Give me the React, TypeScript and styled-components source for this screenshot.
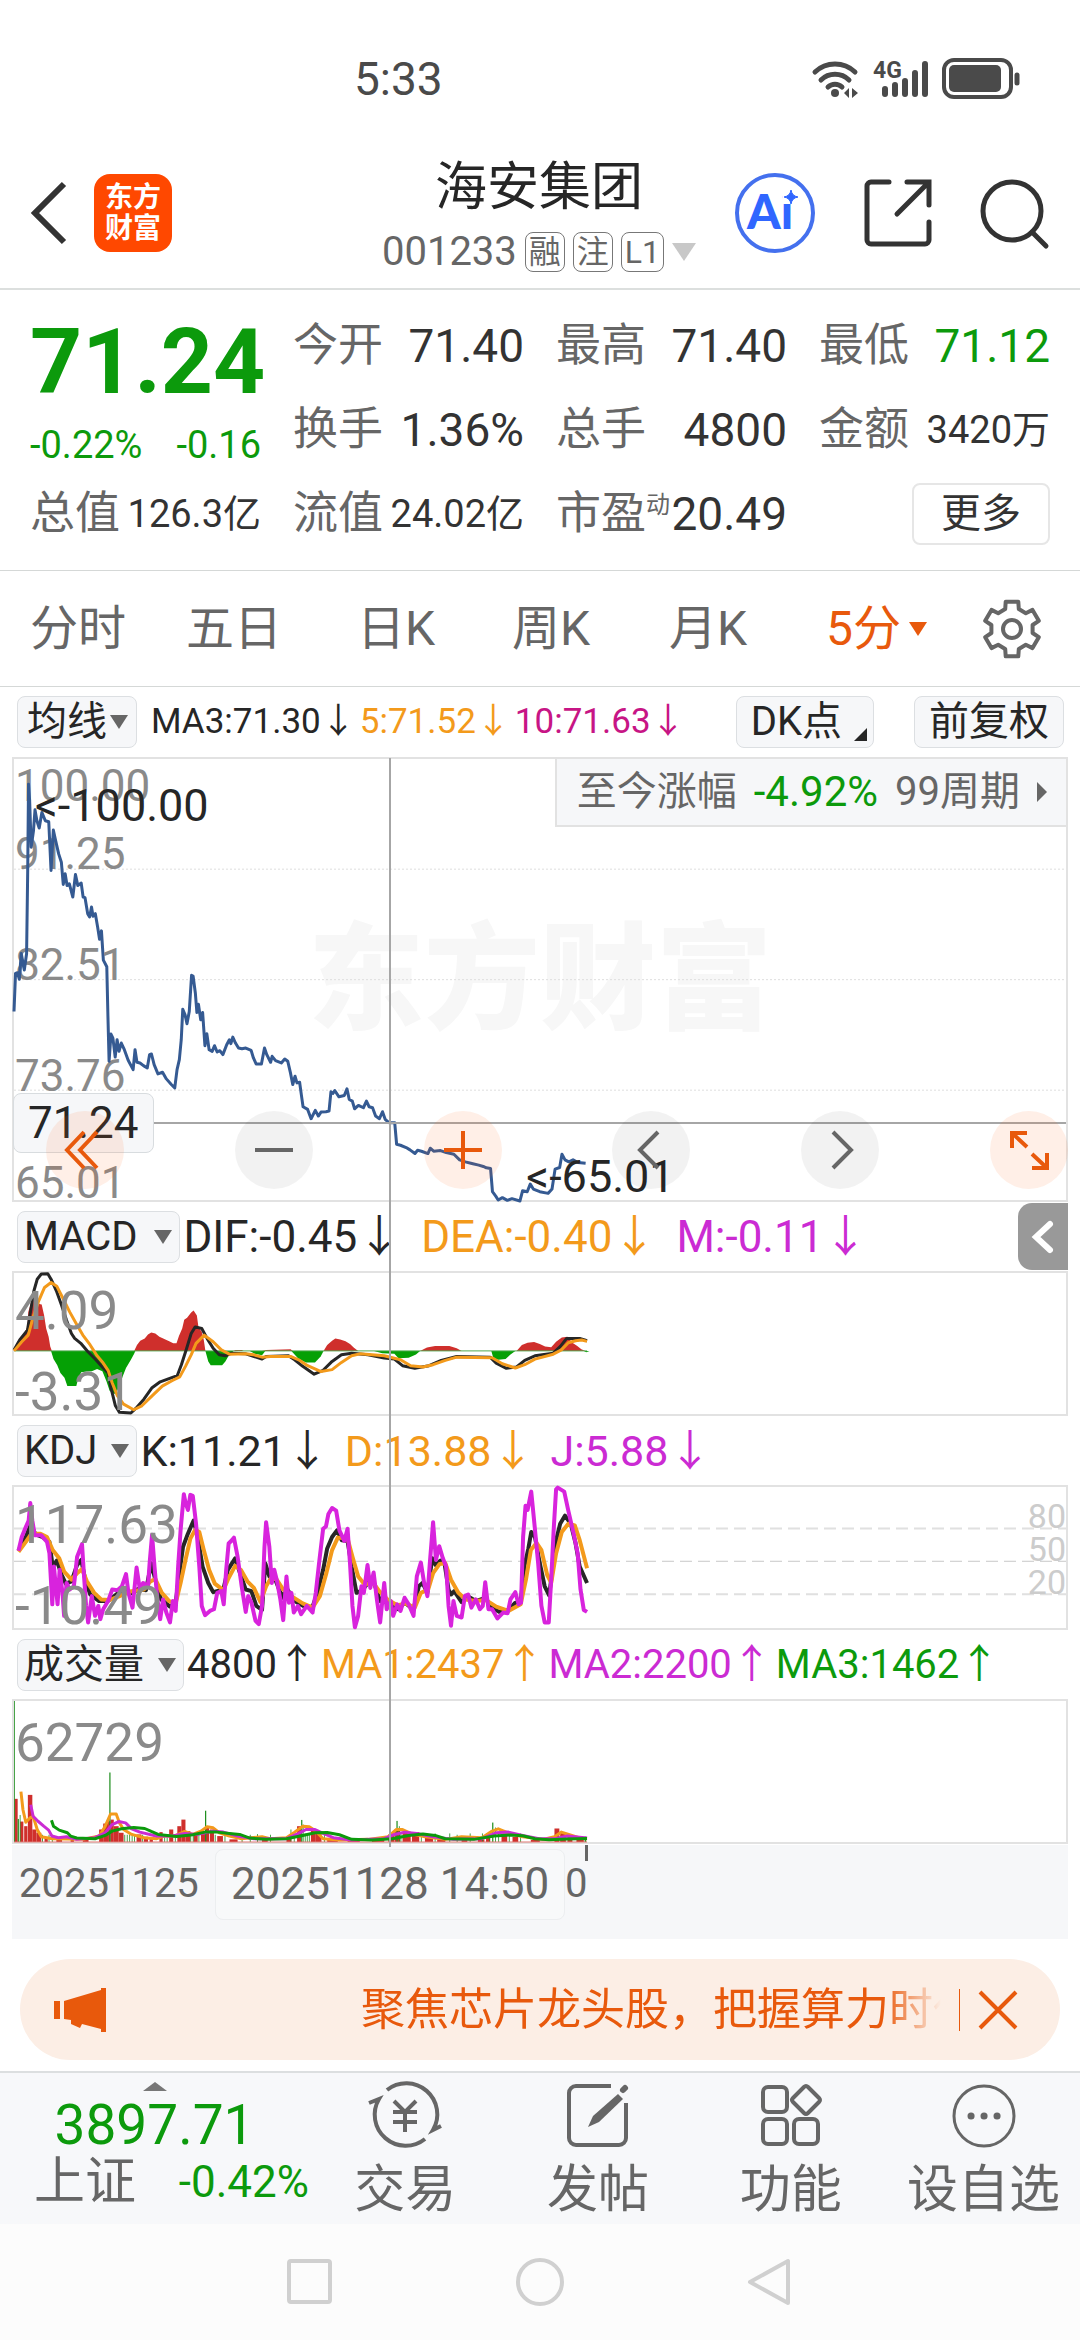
import React from "react";
import styled, { createGlobalStyle, css } from "styled-components";

const C = {
  green: "#0c9a0c",
  orange: "#e8590c",
  amber: "#f39a1b",
  pink: "#c71585",
  violet: "#cb2bd3",
  ink: "#262626",
  text: "#333333",
  muted: "#666666",
  axis: "#8a8a8a",
  frame: "#e2e2e2",
  panel: "#f6f7f9",
  cross: "#a6a6a6",
};

const GlobalStyle = createGlobalStyle`
  * { box-sizing: border-box; }
  body {
    margin: 0;
    background: #fff;
    color: ${C.text};
    font-family: Roboto, "Noto Sans CJK SC", sans-serif;
  }
  button {
    margin: 0;
    padding: 0;
    border: 0;
    background: none;
    color: inherit;
    font: inherit;
  }
  svg { display: block; overflow: visible; }
`;

const Page = styled.div`
  display: flex;
  flex-direction: column;
`;

/* ---------- status bar ---------- */

const StatusBar = styled.div`
  display: flex;
  align-items: center;
  justify-content: space-between;
  height: 108px;
  padding: 50px 60px 0 354px;
  color: #4a4a4a;
`;

const Clock = styled.time`
  font-size: 46px;
  line-height: 60px;
`;

const StatusIcons = styled.div`
  display: flex;
  align-items: center;
  gap: 14px;
`;

/* ---------- header ---------- */

const Header = styled.header`
  display: flex;
  align-items: center;
  height: 182px;
  padding: 0 32px 0 30px;
  border-bottom: 2px solid #dcdfde;
`;

const HeaderSide = styled.div<{ $end?: boolean }>`
  display: flex;
  flex: 1 0 0;
  align-items: center;
  justify-content: ${(p) => (p.$end ? "flex-end" : "flex-start")};
  gap: ${(p) => (p.$end ? 48 : 26)}px;
  padding-top: 30px;
`;

const BrandLogo = styled.button`
  width: 78px;
  height: 78px;
  border-radius: 16px;
  background: #ff4800;
  color: #fff;
  font-size: 28px;
  font-weight: 700;
  line-height: 31px;
`;

const StockName = styled.div`
  display: flex;
  flex-direction: column;
  align-items: center;
  padding-top: 40px;
`;

const Title = styled.h1`
  margin: 0;
  color: ${C.ink};
  font-size: 52px;
  font-weight: 400;
  line-height: 68px;
`;

const CodeLine = styled.div`
  display: flex;
  align-items: center;
  gap: 8px;
  color: ${C.muted};
  font-size: 40px;
  line-height: 60px;
`;

const Tag = styled.span`
  display: inline-flex;
  align-items: center;
  justify-content: center;
  min-width: 40px;
  height: 40px;
  padding: 0 3px;
  border: 1px solid #777;
  border-radius: 8px;
  font-size: 32px;
  line-height: 38px;
`;

const Caret = styled.span<{ $size: number; $color: string; $dir?: "up" | "down" | "right" }>`
  width: 0;
  height: 0;
  flex: none;
  ${({ $size, $color, $dir = "down" }) => {
    if ($dir === "right") {
      return css`
        border-top: ${$size}px solid transparent;
        border-bottom: ${$size}px solid transparent;
        border-left: ${$size}px solid ${$color};
      `;
    }
    const sides = css`
      border-left: ${$size}px solid transparent;
      border-right: ${$size}px solid transparent;
    `;
    return $dir === "up"
      ? css`
          ${sides}
          border-bottom: ${Math.round($size * 0.75)}px solid ${$color};
        `
      : css`
          ${sides}
          border-top: ${Math.round($size * 1.5)}px solid ${$color};
        `;
  }}
`;

/* ---------- quote ---------- */

const Quote = styled.section`
  display: grid;
  grid-template-columns: repeat(4, minmax(0, 1fr));
  grid-auto-rows: 84px;
  column-gap: 32px;
  padding: 14px 30px;
  border-bottom: 1px solid #d5d8d7;
`;

const PriceCell = styled.div`
  grid-row: span 2;
  display: flex;
  flex-direction: column;
  gap: 8px;
  padding-top: 8px;
  color: ${C.green};
`;

const Price = styled.strong`
  font-size: 91px;
  font-weight: 700;
  line-height: 100px;
`;

const Change = styled.div`
  display: flex;
  justify-content: space-between;
  font-size: 38px;
  line-height: 50px;
`;

const Stat = styled.div`
  display: flex;
  align-items: center;
  justify-content: space-between;
  white-space: nowrap;
`;

const StatLabel = styled.span`
  color: ${C.muted};
  font-size: 45px;
  line-height: 60px;
`;

const Sup = styled.sup`
  font-size: 24px;
  line-height: 24px;
`;

const StatValue = styled.span<{ $small?: boolean; $color?: string }>`
  color: ${(p) => p.$color ?? C.text};
  font-size: ${(p) => (p.$small ? 38 : 46)}px;
  line-height: 60px;
`;

const MoreButton = styled.button`
  align-self: center;
  justify-self: end;
  width: 138px;
  height: 62px;
  border: 2px solid #e6e6e6;
  border-radius: 8px;
  font-size: 40px;
  line-height: 56px;
`;

/* ---------- period tabs ---------- */

const Tabs = styled.nav`
  display: grid;
  grid-template-columns: 156fr 156fr 168fr 142fr 172fr 165fr 105fr;
  justify-items: center;
  align-items: center;
  height: 116px;
  padding-right: 16px;
  border-bottom: 1px solid #d5d8d7;
`;

const Tab = styled.button<{ $active?: boolean }>`
  display: flex;
  align-items: center;
  gap: 8px;
  color: ${(p) => (p.$active ? C.orange : C.muted)};
  font-size: 48px;
  line-height: 64px;
`;

/* ---------- charts ---------- */

const Charts = styled.main`
  position: relative;
  padding: 0 12px;
`;

const IndicatorRow = styled.div<{ $size: number }>`
  display: flex;
  align-items: center;
  gap: 3px;
  height: 69px;
  padding-left: 5px;
  color: ${C.ink};
  font-size: ${(p) => p.$size}px;
  line-height: 52px;
  white-space: nowrap;
`;

const AverageRow = styled(IndicatorRow)`
  gap: 14px;
  height: 70px;
`;

const Readings = styled.div<{ $gap: number }>`
  display: flex;
  gap: ${(p) => p.$gap}px;
`;

const Reading = styled.span<{ $color?: string }>`
  color: ${(p) => p.$color ?? C.ink};
`;

const Pill = styled.button<{ $gap: number }>`
  display: flex;
  align-items: center;
  gap: ${(p) => p.$gap}px;
  height: 52px;
  padding: 0 7px 0 6px;
  border: 1px solid #dcdfe2;
  border-radius: 8px;
  background: ${C.panel};
  font-size: 40px;
  line-height: 50px;
`;

const TopPill = styled(Pill)`
  padding: 0 8px 0 9px;
`;

const RightPills = styled.div`
  display: flex;
  gap: 40px;
  margin-left: auto;
  padding-right: 4px;
`;

const WidePill = styled(Pill)`
  padding: 0 14px;
`;

const CornerPill = styled(Pill)`
  padding: 0 6px 0 14px;
`;

const Corner = styled.span`
  align-self: flex-end;
  width: 0;
  height: 0;
  margin-bottom: 6px;
  border-left: 13px solid transparent;
  border-bottom: 13px solid ${C.ink};
`;

const Frame = styled.div<{ $h: number }>`
  position: relative;
  height: ${(p) => p.$h}px;
  border: 2px solid ${C.frame};
`;

const Plot = styled.svg`
  position: absolute;
  inset: 0;
  width: 100%;
  height: 100%;
  path, polyline { vector-effect: non-scaling-stroke; }
`;

const AxisLabel = styled.span<{ $top: number; $size: number }>`
  position: absolute;
  top: ${(p) => p.$top}px;
  left: 1px;
  color: ${C.axis};
  font-size: ${(p) => p.$size}px;
  line-height: ${(p) => p.$size}px;
`;

const LevelLabels = styled.div`
  position: absolute;
  top: 13px;
  right: 0;
  display: flex;
  flex-direction: column;
  color: #cccccc;
  font-size: 34px;
  line-height: 33px;
`;

const Watermark = styled.span`
  position: absolute;
  inset: 0;
  display: flex;
  align-items: center;
  justify-content: center;
  color: #f7f7f7;
  font-size: 116px;
  font-weight: 900;
  line-height: 120px;
`;

const Marker = styled.span<{ $top: number; $left: string }>`
  position: absolute;
  top: ${(p) => p.$top}px;
  left: ${(p) => p.$left};
  color: ${C.ink};
  font-size: 45px;
  line-height: 44px;
`;

const RangeInfo = styled.button`
  position: absolute;
  top: -2px;
  right: -2px;
  display: flex;
  align-items: center;
  gap: 17px;
  height: 70px;
  padding: 0 19px 0 20px;
  border: 2px solid ${C.frame};
  background: ${C.panel};
  color: ${C.muted};
  font-size: 40px;
  line-height: 60px;
`;

const RangeChange = styled.span`
  color: ${C.green};
  font-size: 42px;
`;

const CrossX = styled.span`
  position: absolute;
  top: 363px;
  left: 0;
  right: 0;
  height: 2px;
  background: ${C.cross};
`;

const CrossY = styled.span`
  position: absolute;
  top: 71px;
  bottom: 92px;
  left: 36%;
  width: 2px;
  background: ${C.cross};
`;

const PriceBox = styled.span`
  position: absolute;
  top: 334px;
  left: -1px;
  padding: 0 14px;
  border: 1px solid #d8dcdf;
  border-radius: 8px;
  background: ${C.panel};
  color: ${C.ink};
  font-size: 44px;
  line-height: 58px;
`;

const Controls = styled.div`
  position: absolute;
  right: -2px;
  bottom: 11px;
  left: 32px;
  display: flex;
  justify-content: space-between;
`;

const RoundButton = styled.button<{ $warm?: boolean }>`
  display: grid;
  place-items: center;
  width: 78px;
  height: 78px;
  border-radius: 50%;
  background: ${(p) => (p.$warm ? "rgba(255, 98, 20, 0.1)" : "rgba(0, 0, 0, 0.05)")};
  color: ${(p) => (p.$warm ? C.orange : C.muted)};
`;

const SideHandle = styled.button`
  display: grid;
  place-items: center;
  width: 50px;
  height: 67px;
  margin-left: auto;
  border-radius: 14px 0 0 14px;
  background: #999;
`;

const DateStrip = styled.div`
  position: relative;
  height: 94px;
  margin-top: 1px;
  background: ${C.panel};
  color: ${C.muted};
`;

const DateLabels = styled.div`
  display: flex;
  justify-content: space-between;
  width: 54.5%;
  padding: 15px 0 0 7px;
  font-size: 40px;
  line-height: 48px;
`;

const DateTick = styled.span`
  position: absolute;
  top: 0;
  left: 54.3%;
  width: 3px;
  height: 16px;
  background: ${C.muted};
`;

const DateBox = styled.span`
  position: absolute;
  top: 4px;
  left: 203px;
  padding: 0 15px;
  border: 1px solid #eceef0;
  border-radius: 8px;
  background: #f8f9fa;
  font-size: 44px;
  line-height: 69px;
`;

/* ---------- banner, bottom bar, system navigation ---------- */

const Banner = styled.aside`
  display: flex;
  align-items: center;
  height: 101px;
  margin: 20px 20px 11px;
  padding: 0 43px 0 34px;
  border-radius: 51px;
  background: #fceee5;
  color: ${C.orange};
`;

const BannerText = styled.p`
  flex: 1;
  margin: 0 18px 0 255px;
  overflow: hidden;
  font-size: 44px;
  line-height: 60px;
  white-space: nowrap;
  mask-image: linear-gradient(to right, #000 90%, transparent);
`;

const BannerClose = styled.button`
  display: flex;
  align-items: center;
  padding-left: 19px;
  border-left: 1px solid ${C.orange};
`;

const BottomBar = styled.footer`
  display: grid;
  grid-template-columns: 309px repeat(4, 1fr);
  height: 153px;
  border-top: 2px solid #dcdfe0;
  background: #f7f8fa;
`;

const IndexCell = styled.button`
  display: flex;
  flex-direction: column;
  align-items: center;
  padding-top: 9px;
`;

const IndexValue = styled.span`
  color: ${C.green};
  font-size: 55px;
  line-height: 68px;
`;

const IndexLine = styled.span`
  display: flex;
  align-items: center;
  justify-content: space-between;
  align-self: stretch;
  padding-left: 34px;
  color: ${C.muted};
  font-size: 51px;
  line-height: 46px;
`;

const IndexChange = styled.span`
  color: ${C.green};
  font-size: 44px;
`;

const Action = styled.button`
  display: flex;
  flex-direction: column;
  align-items: center;
  gap: 10px;
  padding-top: 9px;
  color: ${C.muted};
  font-size: 51px;
  line-height: 64px;
  white-space: nowrap;
`;

const SystemNav = styled.nav`
  display: flex;
  align-items: center;
  justify-content: center;
  gap: 180px;
  height: 116px;
  background: #fcfcfc;
`;

/* ---------- icons ---------- */

const line = { fill: "none", stroke: "currentColor" } as const;

const WifiIcon = () => (
  <svg width="48" height="38" viewBox="0 0 48 38" {...line} strokeWidth="5" strokeLinecap="round">
    <path d="M4 12a29 29 0 0 1 40 0M10 20a20 20 0 0 1 28 0M17 27a10 10 0 0 1 14 0" />
    <circle cx="24" cy="33" r="4" fill="currentColor" stroke="none" />
    <path d="M33 33l5-5v10zM47 33l-6-5v10z" fill="currentColor" stroke="none" />
  </svg>
);

const SignalIcon = () => (
  <svg width="55" height="38" viewBox="0 0 55 38" stroke="currentColor" strokeWidth="6" strokeLinecap="round">
    <path d="M12 29v5M22 25v9M32 21v13M42 13v21M52 4v30" />
    <text x="0" y="18" fontSize="23" fontWeight="700" fill="currentColor" stroke="none">
      4G
    </text>
  </svg>
);

const BatteryIcon = () => (
  <svg width="78" height="42" viewBox="0 0 78 42">
    <rect x="2" y="2" width="67" height="37" rx="10" {...line} strokeWidth="4" />
    <rect x="7" y="7" width="52" height="27" rx="5" fill="currentColor" />
    <path d="M75 17v8" stroke="currentColor" strokeWidth="5" strokeLinecap="round" />
  </svg>
);

const BackIcon = () => (
  <svg width="38" height="62" viewBox="0 0 38 62" {...line} strokeWidth="6" color={C.text}>
    <path d="M34 2L5 31l29 29" />
  </svg>
);

const AiIcon = () => (
  <svg width="82" height="82" viewBox="0 0 82 82">
    <circle cx="41" cy="41" r="38" fill="none" stroke="#4470ee" strokeWidth="4" />
    <text x="13" y="57" fontSize="48" fontWeight="900" fontFamily="Lato, Roboto, sans-serif" fill="#3066ff">
      Ai
    </text>
    <path d="M49 17h15v14H49z" fill="#fff" />
    <path d="M57 18q1 6 7 7q-6 1-7 7q-1-6-7-7q6-1 7-7z" fill="#3066ff" stroke="#3066ff" strokeLinejoin="round" />
  </svg>
);

const ShareIcon = () => (
  <svg width="68" height="68" viewBox="0 0 68 68" {...line} strokeWidth="5" strokeLinecap="round" color={C.text}>
    <path d="M25 3H7a4 4 0 0 0-4 4v54a4 4 0 0 0 4 4h54a4 4 0 0 0 4-4V43M65 26V3H43M64 4L33 35" />
  </svg>
);

const SearchIcon = () => (
  <svg width="68" height="70" viewBox="0 0 68 70" {...line} strokeWidth="5" color={C.text}>
    <circle cx="32" cy="33" r="29" />
    <path d="M52 54l14 14" strokeLinecap="round" />
  </svg>
);

/* Six-toothed outline, one tooth every 60 degrees starting at the top. */
const gearPath = (() => {
  const pts: string[] = [];
  for (let i = 0; i < 6; i++) {
    const mid = i * 60 - 90;
    [
      [-19, 21],
      [-13, 28],
      [13, 28],
      [19, 21],
    ].forEach(([offset, r]) => {
      const a = ((mid + offset) * Math.PI) / 180;
      pts.push(`${(30 + r * Math.cos(a)).toFixed(1)} ${(30 + r * Math.sin(a)).toFixed(1)}`);
    });
  }
  return `M${pts.join("L")}Z`;
})();

const GearIcon = () => (
  <svg width="60" height="60" viewBox="0 0 60 60" {...line} strokeWidth="4" strokeLinejoin="round">
    <path d={gearPath} />
    <circle cx="30" cy="30" r="9" />
  </svg>
);

const HornIcon = () => (
  <svg width="52" height="46" viewBox="0 0 52 46" fill="currentColor">
    <path d="M0 14h6v18H0zM10 14L47 3V1h5v44h-5v-3l-19-5-2 4-9-4v-4l-7-1z" />
  </svg>
);

const CloseIcon = () => (
  <svg width="38" height="42" viewBox="0 0 38 42" {...line} strokeWidth="4">
    <path d="M1 3l36 36M37 3L1 39" />
  </svg>
);

const controlIcons: [string, boolean, string][] = [
  ["快退", true, "M38 21L21 39l17 18M51 21L34 39l17 18"],
  ["缩小", false, "M20 39h38"],
  ["放大", true, "M20 39h38M39 20v38"],
  ["左移", false, "M46 21L28 39l18 18"],
  ["右移", false, "M32 21l18 18-18 18"],
  ["全屏", true, "M37 22H22v15M22 22l15 14M42 57h15V42M57 57L42 43"],
];

const TradeIcon = () => (
  <svg width="74" height="66" viewBox="0 0 74 66" {...line} strokeWidth="4">
    <path d="M19 8A31 31 0 0 1 65 48L73 44M57 57A31 31 0 0 1 11 17L1 21" />
    <path d="M26 19l11 11 11-11M37 30v20M25 30h24M25 40h24" />
  </svg>
);

const PostIcon = () => (
  <svg width="62" height="66" viewBox="0 0 62 66" {...line} strokeWidth="4">
    <path d="M44 4H9a7 7 0 0 0-7 7v45a7 7 0 0 0 7 7h43a7 7 0 0 0 7-7V21" />
    <path d="M51 12l5 5-24 23-11 5 5-11z" fill="currentColor" stroke="none" />
    <path d="M56 8l2-2" strokeWidth="6" strokeLinecap="round" />
  </svg>
);

const FeaturesIcon = () => (
  <svg width="62" height="66" viewBox="0 0 62 66" {...line} strokeWidth="4">
    <rect x="3" y="5" width="24" height="25" rx="5" />
    <rect x="3" y="37" width="24" height="25" rx="5" />
    <rect x="34" y="37" width="24" height="25" rx="5" />
    <path d="M44 5q2-2 4 0l11 11q2 2 0 4L48 31q-2 2-4 0L33 20q-2-2 0-4z" />
  </svg>
);

const DotsIcon = () => (
  <svg width="66" height="66" viewBox="0 0 66 66" {...line} strokeWidth="3">
    <circle cx="33" cy="34" r="30" />
    <path d="M20 34h.1M33 34h.1M46 34h.1" strokeWidth="7" strokeLinecap="round" />
  </svg>
);

/* ---------- series ---------- */

const price =
  "33,815 37,700 42,698 47,718 52,640 60,690 66,640 69,380 71,130 74,180 78,320 84,270 88,207 93,240 99,262 106,215 115,240 124,243 130,390 136,268 142,300 150,340 157,365 162,432 167,400 172,435 178,430 187,470 194,402 200,435 209,428 214,470 219,472 226,520 231,530 236,500 240,528 246,520 252,560 257,597 262,572 267,660 276,680 279,830 282,965 287,883 292,895 298,952 303,900 308,935 314,910 322,930 332,962 345,990 350,930 355,968 363,970 372,978 382,985 388,945 393,943 400,975 410,1003 422,998 432,1018 445,1035 454,1045 460,990 466,960 471,900 475,808 481,825 486,852 492,815 498,706 502,708 508,760 512,818 516,793 522,840 527,818 533,918 538,882 544,930 552,935 558,918 565,937 572,933 580,945 590,915 597,900 601,912 606,892 613,910 621,925 630,927 640,925 654,932 660,955 667,973 681,973 689,925 695,945 705,968 709,950 718,963 733,970 742,958 750,965 757,1000 763,1035 769,1010 774,1030 781,1028 786,1070 790,1102 802,1110 811,1138 822,1113 830,1130 837,1118 850,1117 858,1115 863,1057 868,1062 873,1053 884,1072 898,1068 905,1048 911,1080 919,1085 925,1108 935,1098 948,1105 956,1085 963,1102 972,1105 980,1130 990,1138 998,1117 1005,1140 1015,1150 1030,1150 1035,1215 1045,1218 1060,1225 1070,1232 1083,1243 1090,1233 1100,1236 1117,1243 1123,1227 1132,1236 1150,1234 1165,1240 1185,1245 1200,1262 1215,1268 1232,1273 1250,1278 1262,1282 1270,1286 1281,1288 1286,1358 1295,1372 1301,1383 1312,1376 1325,1384 1337,1379 1358,1386 1365,1355 1377,1358 1385,1335 1393,1350 1410,1358 1432,1363 1442,1350 1450,1290 1462,1285 1468,1245 1476,1262 1486,1268 1497,1262 1510,1270 1530,1272";

const macdUp = [
  "31,453 36,432 46,412 56,400 64,380 66,335 72,310 80,290 88,280 93,310 99,312 105,345 110,385 116,410 120,440 124,453",
  "326,453 333,435 341,422 352,415 360,403 368,397 378,400 388,410 400,417 412,424 422,430 430,430 436,408 444,385 449,358 456,352 466,336 472,330 480,345 484,382 492,395 497,420 501,453",
  "791,453 800,435 812,422 820,415 832,418 845,424 856,432 865,443 876,453",
  "1028,453 1045,443 1065,438 1100,438 1118,445 1130,453",
  "1265,453 1278,435 1292,428 1308,426 1322,432 1335,440 1350,442 1362,425 1376,412 1390,410 1402,428 1414,438 1424,448 1434,453",
  "570,453 575,450 590,450 595,453",
  "640,453 650,450 710,448 716,453",
];

const macdDown = [
  "122,453 128,478 137,496 145,520 155,535 162,560 184,560 188,540 196,518 210,516 222,515 235,508 248,515 258,545 266,575 280,585 290,560 298,530 306,505 318,480 326,462 329,453",
  "501,453 508,485 514,497 542,497 550,485 558,468 570,453",
  "610,453 622,462 640,466 648,453",
  "712,453 730,478 748,488 770,488 784,470 791,453",
  "915,453 935,460 965,462 975,475 1000,474 1018,464 1028,453",
  "1203,453 1208,475 1220,480 1238,478 1250,464 1262,453",
  "1430,453 1436,457 1444,453",
];

const dif =
  "31,450 45,420 64,390 72,330 80,270 88,235 98,219 114,218 122,235 135,270 148,315 160,360 172,400 180,415 195,430 212,455 232,480 250,505 262,520 270,570 280,620 290,640 318,642 330,628 350,600 370,565 390,547 410,538 432,528 442,495 455,445 466,400 476,380 492,385 505,415 520,445 535,465 550,468 565,460 600,462 640,478 650,470 705,468 720,480 740,500 768,524 790,512 812,485 835,465 860,460 900,465 940,475 965,478 985,498 1015,506 1050,498 1080,482 1118,470 1200,472 1215,490 1240,506 1265,502 1285,482 1310,468 1355,460 1372,440 1388,415 1420,415 1438,422";

const dea =
  "31,453 50,425 66,405 78,350 92,300 106,260 122,245 136,256 152,295 168,335 186,375 200,405 218,435 235,468 250,490 262,512 272,550 285,590 300,615 325,632 345,620 370,590 395,560 420,543 438,532 452,500 466,465 478,430 498,405 520,425 540,450 560,463 600,462 620,465 640,472 660,470 710,470 730,480 752,498 785,516 812,510 835,488 860,468 880,462 940,468 980,480 1005,498 1035,502 1060,495 1090,482 1118,472 1205,474 1230,492 1262,505 1285,495 1310,478 1355,463 1375,450 1392,428 1410,422 1425,420 1438,424";

const kdjJ =
  "42,392 50,350 60,320 67,300 71,247 76,300 82,345 98,345 112,365 118,400 125,555 129,440 138,555 143,450 150,520 154,590 160,490 168,510 178,500 186,410 198,372 203,470 208,560 213,610 222,530 230,590 238,560 243,600 250,570 262,545 272,510 285,512 296,500 306,463 312,520 322,565 332,443 340,510 348,490 360,500 364,430 370,343 376,440 383,540 390,600 397,540 405,580 414,610 421,545 428,575 434,440 440,330 448,220 452,245 458,268 464,222 470,225 478,310 486,440 492,560 500,588 512,575 522,570 530,520 540,515 546,555 552,450 558,370 566,360 571,352 580,410 590,500 600,578 606,530 614,550 624,605 632,615 640,560 646,380 650,305 658,380 664,490 670,450 676,480 685,540 692,603 700,470 706,550 712,520 718,580 728,560 736,585 750,560 764,580 772,520 780,430 790,325 797,318 803,280 812,262 822,270 830,330 842,362 850,325 856,430 862,560 868,625 876,590 884,500 890,520 899,435 906,505 914,458 922,540 930,610 940,490 946,570 956,545 962,590 972,555 980,575 990,535 1000,555 1012,590 1020,470 1030,428 1038,490 1046,530 1052,430 1060,305 1067,420 1075,378 1084,415 1092,440 1098,560 1104,620 1110,545 1118,590 1130,595 1138,530 1146,525 1154,565 1165,540 1175,570 1182,560 1188,488 1196,570 1205,570 1218,598 1232,580 1243,582 1250,540 1262,518 1270,555 1276,550 1281,350 1287,255 1292,268 1301,212 1308,300 1318,430 1326,560 1334,610 1344,610 1350,480 1356,330 1362,205 1366,200 1382,212 1392,270 1405,340 1415,400 1422,510 1430,572 1438,578";

const kdjK =
  "42,392 60,350 72,312 84,342 100,350 118,365 126,440 136,422 148,465 158,492 172,485 186,435 196,420 206,480 218,525 240,545 262,545 285,522 305,510 322,522 335,508 355,512 368,430 378,480 392,540 414,562 428,550 436,470 446,380 458,340 472,300 482,350 494,440 508,490 520,518 545,510 556,450 574,415 586,460 600,510 614,515 626,560 640,572 648,430 658,470 672,478 690,535 700,505 720,545 745,562 764,562 776,520 790,450 800,385 812,350 824,330 836,360 850,362 860,440 872,520 886,512 900,490 915,490 930,545 950,550 975,570 990,550 1012,570 1025,500 1034,490 1046,520 1058,415 1066,435 1078,422 1088,430 1098,510 1104,525 1112,515 1130,548 1145,530 1165,545 1188,535 1205,565 1222,578 1245,572 1262,550 1275,550 1284,440 1294,385 1301,335 1310,350 1322,430 1334,500 1345,528 1354,440 1362,360 1372,310 1384,285 1398,310 1410,370 1420,440 1438,490";

const kdjD =
  "42,395 60,365 74,340 96,340 112,350 126,390 142,415 154,455 172,480 186,460 198,448 210,485 228,520 245,540 265,542 290,530 320,515 350,510 366,485 378,478 394,520 412,545 428,552 440,490 452,420 464,355 476,328 486,335 496,385 510,450 524,492 545,512 558,475 574,438 588,450 604,485 620,505 636,548 650,500 662,475 676,480 692,510 712,530 740,552 764,565 782,530 798,460 812,390 826,352 850,355 862,410 876,470 892,495 912,488 928,515 948,540 972,558 992,552 1015,565 1030,520 1048,510 1060,460 1076,432 1090,430 1104,480 1122,520 1140,540 1165,545 1190,542 1215,562 1245,575 1275,555 1288,480 1300,390 1314,368 1326,390 1340,465 1350,490 1362,400 1376,335 1392,310 1408,315 1420,360 1438,445";

/* [x, width, top] of each volume column; the baseline sits at 638. */
const volUp: [number, number, number][] = [
  [32, 8, 507], [46, 8, 576], [56, 8, 590], [65, 11, 495], [76, 10, 600], [86, 12, 610], [106, 8, 625],
  [135, 14, 630], [170, 8, 632], [200, 14, 630], [240, 10, 600], [250, 12, 582], [262, 6, 575], [268, 8, 570],
  [276, 12, 590], [288, 12, 610], [332, 12, 615], [350, 10, 622], [364, 8, 628], [388, 8, 608], [412, 10, 600],
  [432, 10, 590], [442, 10, 570], [452, 12, 605], [472, 10, 618], [490, 10, 610], [502, 8, 590], [512, 10, 600],
  [530, 14, 620], [560, 20, 630], [640, 14, 630], [700, 12, 622], [726, 10, 590], [760, 12, 600], [772, 14, 612],
  [800, 26, 628], [850, 30, 634], [910, 30, 632], [950, 14, 615], [965, 14, 600], [985, 20, 608], [1008, 18, 608],
  [1040, 20, 625], [1070, 20, 630], [1130, 14, 630], [1170, 16, 630], [1190, 10, 612], [1228, 14, 612],
  [1255, 14, 622], [1300, 22, 632], [1358, 12, 597], [1372, 14, 608], [1390, 12, 618], [1412, 18, 630],
];
const volDown: [number, number, number][] = [
  [31, 2, 210], [40, 3, 568], [45, 2, 556], [265, 3, 427], [500, 3, 543], [710, 2, 600], [736, 3, 571], [740, 2, 585],
  [970, 3, 574], [976, 2, 590], [1205, 3, 579], [1212, 2, 594], [628, 2, 614], [1118, 2, 616], [1432, 4, 622],
  ...[100, 116, 124, 302, 308, 314, 320, 326, 346, 400, 406, 426, 464, 470, 484, 524, 548, 590, 610, 660, 718].map(
    (x): [number, number, number] => [x, 2, 616],
  ),
  ...[745, 750, 755, 792, 980, 1030, 1064, 1100, 1150, 1180, 1198, 1220, 1246, 1274].map(
    (x): [number, number, number] => [x, 2, 612],
  ),
];

const volMa: [string, string][] = [
  [C.amber, "48,485 53,540 60,578 70,565 78,560 88,600 98,622 125,628 200,630 240,620 255,590 268,553 282,553 290,580 300,600 320,615 350,625 380,628 400,620 425,620 450,606 470,615 490,605 505,592 520,595 535,610 560,620 590,628 640,622 660,628 700,625 720,608 740,590 756,592 772,605 790,628 830,632 900,630 950,622 970,600 985,600 1005,612 1040,622 1090,630 1130,622 1180,625 1205,605 1220,598 1240,608 1280,622 1330,630 1358,622 1375,608 1395,616 1420,626 1438,628"],
  [C.violet, "72,525 78,560 90,575 104,590 116,602 124,620 140,625 160,622 185,630 230,625 255,610 272,585 288,576 305,580 320,598 340,608 380,620 420,620 450,612 480,615 520,605 545,608 580,620 620,628 700,628 730,612 748,600 770,600 790,612 815,625 860,632 940,628 965,615 990,608 1020,612 1060,622 1110,630 1180,628 1215,610 1245,608 1280,618 1320,628 1360,628 1390,620 1438,626"],
  [C.green, "123,572 128,590 142,602 162,610 170,620 185,626 230,628 255,618 272,605 295,598 325,594 352,597 368,606 385,615 430,621 470,616 500,608 530,608 560,612 585,615 610,626 650,630 700,628 740,618 770,610 800,609 830,616 860,630 910,632 960,628 1000,618 1035,614 1065,618 1090,628 1160,630 1210,620 1250,617 1280,619 1310,628 1345,631 1390,629 1438,627"],
];

const Series = ({ points, color, width = 3 }: { points: string; color: string; width?: number }) => (
  <polyline points={points} fill="none" stroke={color} strokeWidth={width} strokeLinejoin="round" />
);

const stats: { label: string; value: string; small?: boolean; color?: string; sup?: string }[] = [
  { label: "今开", value: "71.40" },
  { label: "最高", value: "71.40" },
  { label: "最低", value: "71.12", color: C.green },
  { label: "换手", value: "1.36%" },
  { label: "总手", value: "4800" },
  { label: "金额", value: "3420万", small: true },
  { label: "总值", value: "126.3亿", small: true },
  { label: "流值", value: "24.02亿", small: true },
  { label: "市盈", value: "20.49", sup: "动" },
];

export default function App() {
  return (
    <Page>
      <GlobalStyle />
      <StatusBar>
        <Clock>5:33</Clock>
        <StatusIcons>
          <WifiIcon />
          <SignalIcon />
          <BatteryIcon />
        </StatusIcons>
      </StatusBar>

      <Header>
        <HeaderSide>
          <button aria-label="返回">
            <BackIcon />
          </button>
          <BrandLogo>
            东方
            <br />
            财富
          </BrandLogo>
        </HeaderSide>
        <StockName>
          <Title>海安集团</Title>
          <CodeLine>
            001233
            <Tag>融</Tag>
            <Tag>注</Tag>
            <Tag>L1</Tag>
            <Caret $size={12} $color="#c8c8c8" />
          </CodeLine>
        </StockName>
        <HeaderSide $end>
          <button aria-label="智能助手">
            <AiIcon />
          </button>
          <button aria-label="分享">
            <ShareIcon />
          </button>
          <button aria-label="搜索">
            <SearchIcon />
          </button>
        </HeaderSide>
      </Header>

      <Quote>
        <PriceCell>
          <Price>71.24</Price>
          <Change>
            <span>-0.22%</span>
            <span>-0.16</span>
          </Change>
        </PriceCell>
        {stats.map((s) => (
          <Stat key={s.label}>
            <StatLabel>
              {s.label}
              {s.sup && <Sup>{s.sup}</Sup>}
            </StatLabel>
            <StatValue $small={s.small} $color={s.color}>
              {s.value}
            </StatValue>
          </Stat>
        ))}
        <MoreButton>更多</MoreButton>
      </Quote>

      <Tabs>
        {["分时", "五日", "日K", "周K", "月K"].map((t) => (
          <Tab key={t}>{t}</Tab>
        ))}
        <Tab $active>
          5分
          <Caret $size={9} $color={C.orange} />
        </Tab>
        <Tab aria-label="设置">
          <GearIcon />
        </Tab>
      </Tabs>

      <Charts>
        <AverageRow $size={35}>
          <TopPill $gap={3}>
            均线
            <Caret $size={9} $color={C.muted} />
          </TopPill>
          <Readings $gap={4}>
            <Reading>MA3:71.30↓</Reading>
            <Reading $color={C.amber}>5:71.52↓</Reading>
            <Reading $color={C.pink}>10:71.63↓</Reading>
          </Readings>
          <RightPills>
            <CornerPill $gap={12}>
              DK点
              <Corner />
            </CornerPill>
            <WidePill $gap={0}>前复权</WidePill>
          </RightPills>
        </AverageRow>

        <Frame $h={445}>
          <Watermark>东方财富</Watermark>
          <Plot viewBox="33 54 2755 1329" preserveAspectRatio="none">
            <path d="M33 386H2788M33 719H2788M33 1052H2788" stroke="#dedede" strokeDasharray="2 2" />
          </Plot>
          <AxisLabel $top={5} $size={44}>100.00</AxisLabel>
          <AxisLabel $top={73} $size={44}>91.25</AxisLabel>
          <AxisLabel $top={184} $size={44}>82.51</AxisLabel>
          <AxisLabel $top={295} $size={44}>73.76</AxisLabel>
          <AxisLabel $top={402} $size={44}>65.01</AxisLabel>
          <Plot viewBox="33 54 2755 1329" preserveAspectRatio="none">
            <Series points={price} color="#355a92" />
          </Plot>
          <Marker $top={25} $left="21px">&lt;-100.00</Marker>
          <Marker $top={396} $left="48.7%">&lt;-65.01</Marker>
          <RangeInfo>
            至今涨幅
            <RangeChange>-4.92%</RangeChange>
            99周期
            <Caret $size={10} $color={C.muted} $dir="right" />
          </RangeInfo>
          <CrossX />
          <PriceBox>71.24</PriceBox>
          <Controls>
            {controlIcons.map(([label, warm, d]) => (
              <RoundButton key={label} $warm={warm} aria-label={label}>
                <svg width="78" height="78" viewBox="0 0 78 78" {...line} strokeWidth="4">
                  <path d={d} />
                </svg>
              </RoundButton>
            ))}
          </Controls>
        </Frame>

        <IndicatorRow $size={44}>
          <Pill $gap={17}>
            MACD
            <Caret $size={9} $color={C.muted} />
          </Pill>
          <Readings $gap={20}>
            <Reading>DIF:-0.45↓</Reading>
            <Reading $color={C.amber}>DEA:-0.40↓</Reading>
            <Reading $color={C.violet}>M:-0.11↓</Reading>
          </Readings>
          <SideHandle aria-label="展开侧栏">
            <svg width="22" height="34" viewBox="0 0 22 34" fill="none" stroke="#fff" strokeWidth="6" strokeLinecap="round">
              <path d="M18 4L4 17l14 13" />
            </svg>
          </SideHandle>
        </IndicatorRow>

        <Frame $h={145}>
          <Plot viewBox="31 216 2583 429" preserveAspectRatio="none">
            {macdUp.map((p) => (
              <polygon key={p} points={p} fill="#cf2f2c" />
            ))}
            {macdDown.map((p) => (
              <polygon key={p} points={p} fill="#05a005" />
            ))}
            <path d="M31 453H1438" stroke="#4fa84f" strokeWidth="1" />
            <Series points={dif} color={C.ink} />
            <Series points={dea} color={C.amber} />
          </Plot>
          <AxisLabel $top={12} $size={53}>4.09</AxisLabel>
          <AxisLabel $top={93} $size={53}>-3.31</AxisLabel>
        </Frame>

        <IndicatorRow $size={43}>
          <Pill $gap={14}>
            KDJ
            <Caret $size={9} $color={C.muted} />
          </Pill>
          <Readings $gap={16}>
            <Reading>K:11.21↓</Reading>
            <Reading $color={C.amber}>D:13.88↓</Reading>
            <Reading $color={C.violet}>J:5.88↓</Reading>
          </Readings>
        </IndicatorRow>

        <Frame $h={145}>
          <Plot viewBox="31 198 2583 429" preserveAspectRatio="none">
            <path d="M31 324H2614M31 524H2614" stroke="#e0e0e0" strokeWidth="2" strokeDasharray="12 6" />
            <path d="M31 424H2614" stroke="#c8c8c8" strokeWidth="1" strokeDasharray="12 6" />
            <Series points={kdjK} color={C.ink} width={4} />
            <Series points={kdjD} color={C.amber} width={4} />
            <Series points={kdjJ} color="#d823dd" width={4} />
          </Plot>
          <AxisLabel $top={12} $size={53}>117.63</AxisLabel>
          <AxisLabel $top={93} $size={53}>-10.49</AxisLabel>
          <LevelLabels>
            <span>80</span>
            <span>50</span>
            <span>20</span>
          </LevelLabels>
        </Frame>

        <IndicatorRow $size={40}>
          <Pill $gap={14}>
            成交量
            <Caret $size={9} $color={C.muted} />
          </Pill>
          <Readings $gap={4}>
            <Reading>4800↑</Reading>
            <Reading $color={C.amber}>MA1:2437↑</Reading>
            <Reading $color={C.violet}>MA2:2200↑</Reading>
            <Reading $color={C.green}>MA3:1462↑</Reading>
          </Readings>
        </IndicatorRow>

        <Frame $h={145}>
          <Plot viewBox="31 210 2583 428" preserveAspectRatio="none">
            {volUp.map(([x, w, top]) => (
              <rect key={`u${x}`} x={x} y={top} width={w} height={638 - top} fill="#cf2f2c" />
            ))}
            {volDown.map(([x, w, top]) => (
              <rect key={`d${x}`} x={x} y={top} width={w} height={638 - top} fill="#1f8f1f" />
            ))}
            <path d="M31 638H1438" stroke="#e07a74" strokeWidth="1" />
            {volMa.map(([color, points]) => (
              <Series key={color} points={points} color={color} />
            ))}
          </Plot>
          <AxisLabel $top={16} $size={53}>62729</AxisLabel>
        </Frame>

        <DateStrip>
          <DateLabels>
            <span>20251125</span>
            <span>0</span>
          </DateLabels>
          <DateTick />
          <DateBox>20251128 14:50</DateBox>
        </DateStrip>
        <CrossY />
      </Charts>

      <Banner>
        <HornIcon />
        <BannerText>聚焦芯片龙头股，把握算力时代</BannerText>
        <BannerClose aria-label="关闭">
          <CloseIcon />
        </BannerClose>
      </Banner>

      <BottomBar>
        <IndexCell>
          <Caret $size={12} $color="#777" $dir="up" />
          <IndexValue>3897.71</IndexValue>
          <IndexLine>
            上证
            <IndexChange>-0.42%</IndexChange>
          </IndexLine>
        </IndexCell>
        <Action>
          <TradeIcon />
          交易
        </Action>
        <Action>
          <PostIcon />
          发帖
        </Action>
        <Action>
          <FeaturesIcon />
          功能
        </Action>
        <Action>
          <DotsIcon />
          设自选
        </Action>
      </BottomBar>

      <SystemNav>
        <button aria-label="最近任务">
          <svg width="50" height="50" viewBox="0 0 50 50" {...line} strokeWidth="4" color="#d0d0d0">
            <rect x="4" y="4" width="41" height="41" rx="2" />
          </svg>
        </button>
        <button aria-label="主屏幕">
          <svg width="50" height="50" viewBox="0 0 50 50" {...line} strokeWidth="4" color="#d0d0d0">
            <circle cx="25" cy="25" r="22" />
          </svg>
        </button>
        <button aria-label="返回上一页">
          <svg width="50" height="50" viewBox="0 0 50 50" {...line} strokeWidth="4" strokeLinejoin="round" color="#d0d0d0">
            <path d="M43 4v42L5 25z" />
          </svg>
        </button>
      </SystemNav>
    </Page>
  );
}
